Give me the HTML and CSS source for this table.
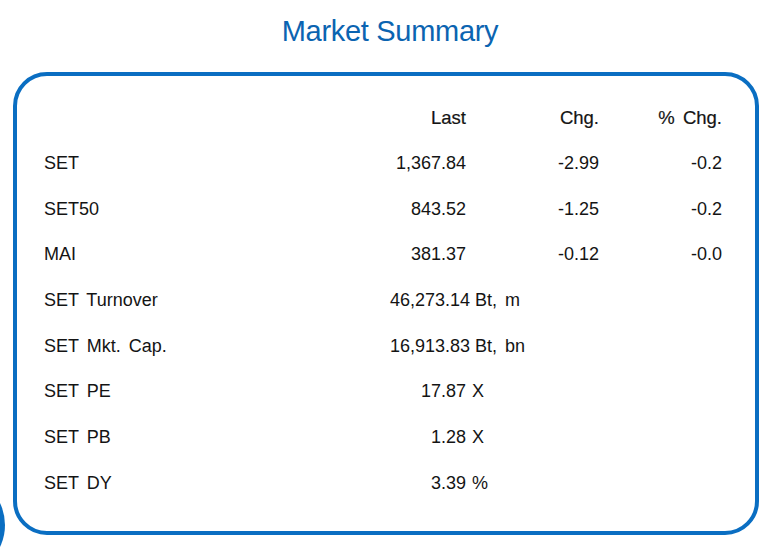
FILE: index.html
```html
<!DOCTYPE html>
<html>
<head>
<meta charset="utf-8">
<link rel="stylesheet" href="styles.css">
</head>
<body>
<div class="page">
  <h1 class="title">Market Summary</h1>
  <div class="card">
    <div class="grid">
      <div class="lbl"></div><div class="num head">Last</div><div class="num head">Chg.</div><div class="num head">% Chg.</div>

      <div class="lbl">SET</div><div class="num">1,367.84</div><div class="num">-2.99</div><div class="num">-0.2</div>
      <div class="lbl">SET50</div><div class="num">843.52</div><div class="num">-1.25</div><div class="num">-0.2</div>
      <div class="lbl">MAI</div><div class="num">381.37</div><div class="num">-0.12</div><div class="num">-0.0</div>

      <div class="lbl">SET Turnover</div><div class="num">46,273.14<span class="unit">Bt, m</span></div><div></div><div></div>
      <div class="lbl">SET Mkt. Cap.</div><div class="num">16,913.83<span class="unit">Bt, bn</span></div><div></div><div></div>
      <div class="lbl">SET PE</div><div class="num">17.87<span class="unit u2">X</span></div><div></div><div></div>
      <div class="lbl">SET PB</div><div class="num">1.28<span class="unit u2">X</span></div><div></div><div></div>
      <div class="lbl">SET DY</div><div class="num">3.39<span class="unit u2">%</span></div><div></div><div></div>
    </div>
  </div>
  <div class="dot"></div>
</div>
</body>
</html>
```

FILE: styles.css
```css
html, body {
  margin: 0;
  padding: 0;
  background: #ffffff;
}
.page {
  position: relative;
  width: 780px;
  height: 558px;
  overflow: hidden;
  font-family: "Liberation Sans", Arial, sans-serif;
  color: #141414;
}
.title {
  margin: 0;
  height: 72px;
  box-sizing: border-box;
  padding-top: 13px;
  text-align: center;
  font-weight: normal;
  font-size: 29px;
  line-height: 36px;
  letter-spacing: -0.3px;
  color: #0b64b1;
}
.card {
  margin-left: 13px;
  width: 746px;
  height: 463px;
  box-sizing: border-box;
  border: 4px solid #0a6ec2;
  border-radius: 34px;
  padding: 19px 0 0 27px;
}
.grid {
  display: grid;
  grid-template-columns: 346px 76px 133px 123px;
  grid-auto-rows: 45.7px;
  align-items: center;
  font-size: 18px;
  word-spacing: 3px;
}
.num {
  text-align: right;
  white-space: nowrap;
}
.head {
  font-size: 18.5px;
  -webkit-text-stroke: 0.2px #141414;
}
.unit {
  display: inline-block;
  width: 0;
  white-space: nowrap;
  text-align: left;
  text-indent: 5px;
  word-spacing: 3px;
}
.u2 {
  text-indent: 6px;
}
.dot {
  position: absolute;
  left: -97px;
  top: 474px;
  width: 102px;
  height: 102px;
  border-radius: 50%;
  background: #0a6ec2;
}
```
